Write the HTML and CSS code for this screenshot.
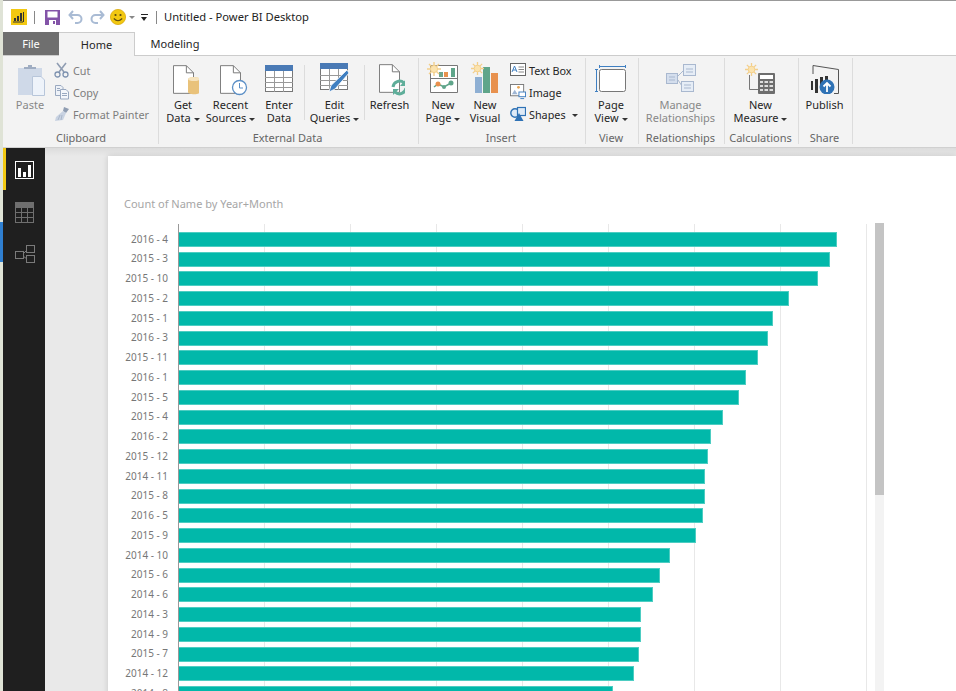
FILE: index.html
```html
<!DOCTYPE html>
<html lang="en">
<head>
    <meta charset="UTF-8" />
    <title>Untitled - Power BI Desktop</title>
    <link rel="stylesheet" href="styles.css">
</head>
<body>

<svg class="sprite" aria-hidden="true">
    <symbol id="sun" viewBox="0 0 14 14">
        <g stroke="#f3cf8b" stroke-width="1.4">
            <path d="M7 0V14M0 7H14M2 2L12 12M12 2L2 12"/>
        </g>
        <circle cx="7" cy="7" r="3.6" fill="#fbe3ae" stroke="#f3cf8b"/>
    </symbol>
    <symbol id="doc" viewBox="0 0 22 30">
        <path d="M.5 .5H14L21.5 8V29.5H.5Z" fill="#fff" stroke="#777"/>
        <path d="M14 .5V8H21.5" fill="none" stroke="#777"/>
    </symbol>
    <symbol id="grid" viewBox="0 0 28 27">
        <rect x=".5" y=".5" width="27" height="26" fill="#fff" stroke="#777"/>
        <rect width="28" height="6" fill="#4a7ab5"/>
        <path d="M0 12.5H28M0 17.5H28M0 22.5H28M9.5 6V27M18.5 6V27" stroke="#999"/>
    </symbol>
</svg>

<div class="desktop-edge">
    <div class="edge-blue"></div>
</div>

<div class="window">
    <header class="titlebar">
        <svg class="qa-logo" width="16" height="16" viewBox="0 0 16 16">
            <rect width="16" height="16" fill="#f2c811"/>
            <path d="M3 12V9H5V12ZM6 12V7H8V12ZM9 12V4H11V12ZM12 13V3H13V13Z" fill="#333"/>
            <path d="M2 13H12" stroke="#333"/>
        </svg>
        <span class="qa-sep"></span>
        <svg class="qa-save" width="15" height="15" viewBox="0 0 15 15">
            <path d="M0 0H15V15H0Z" fill="#8354a8"/>
            <rect x="2.5" y="1.5" width="10" height="6" fill="#fff"/>
            <rect x="4" y="10" width="7" height="5" fill="#fff"/>
            <rect x="8" y="11" width="2" height="3" fill="#8354a8"/>
        </svg>
        <svg class="qa-arrow" width="15" height="14" viewBox="0 0 15 14">
            <path d="M5 1L1.5 5L5 9M2 5H9.5A4 4 0 0 1 9.5 13H7" fill="none" stroke="#a9bbd4" stroke-width="2"/>
        </svg>
        <svg class="qa-arrow" width="15" height="14" viewBox="0 0 15 14">
            <path d="M10 1L13.5 5L10 9M13 5H5.5A4 4 0 0 0 5.5 13H8" fill="none" stroke="#a9bbd4" stroke-width="2"/>
        </svg>
        <svg class="qa-smile" width="16" height="16" viewBox="0 0 16 16">
            <circle cx="8" cy="8" r="7.6" fill="#f2c811" stroke="#d9a90c" stroke-width=".8"/>
            <circle cx="5.5" cy="6" r="1.1" fill="#5a4a10"/>
            <circle cx="10.5" cy="6" r="1.1" fill="#5a4a10"/>
            <path d="M3.8 9.5Q8 14 12.2 9.5" fill="none" stroke="#5a4a10" stroke-width="1.1"/>
        </svg>
        <span class="caret caret-grey"></span>
        <span class="qa-custom"></span>
        <span class="qa-sep qa-sep-last"></span>
        <span class="window-title">Untitled - Power BI Desktop</span>
    </header>

    <nav class="tabs">
        <a class="tab tab-file">File</a>
        <a class="tab tab-active">Home</a>
        <a class="tab tab-plain">Modeling</a>
    </nav>

    <section class="ribbon">
        <div class="group group-clipboard">
            <div class="group-body">
                <div class="rb-btn rb-disabled w-paste">
                    <div class="rb-icon">
                        <svg width="30" height="36" viewBox="-2 0 30 36">
                            <rect x="1" y="8" width="24" height="27" fill="#cfd9e8"/>
                            <path d="M7 9V7H11V5H15V7H19V9Z" fill="#9fadc2"/>
                            <path d="M15.500 16.500H24L27.500 20V35.500H15.500Z" fill="#eef3fa" stroke="#b8c6da"/>
                        </svg>
                    </div>
                    <span>Paste</span>
                </div>
                <div class="small-col">
                    <div class="small-btn small-disabled">
                        <svg width="16" height="16" viewBox="0 0 16 16">
                            <path d="M3 1L10 10M12 1L5 10" stroke="#8f9db2" stroke-width="1.6"/>
                            <circle cx="3.500" cy="12.500" r="2.500" fill="none" stroke="#7f93b0" stroke-width="1.300"/>
                            <circle cx="11.500" cy="12.500" r="2.500" fill="none" stroke="#7f93b0" stroke-width="1.300"/>
                        </svg>
                        <span>Cut</span>
                    </div>
                    <div class="small-btn small-disabled">
                        <svg width="16" height="16" viewBox="0 0 16 16">
                            <path d="M1.500 1.500H7L9 3.500V11.500H1.500Z" fill="#eef2f8" stroke="#9aa9c0"/>
                            <path d="M6.500 5.500H12L14.500 8V15H6.500Z" fill="#f5f7fb" stroke="#9aa9c0"/>
                            <path d="M8 9.500H13M8 11.500H13M3 4.500H6M3 6.500H6" stroke="#9aa9c0"/>
                        </svg>
                        <span>Copy</span>
                    </div>
                    <div class="small-btn small-disabled">
                        <svg width="16" height="16" viewBox="0 0 16 16">
                            <path d="M10 1L15 3L12 7L9 5Z" fill="#8f9db2"/>
                            <path d="M9 5L12 7L9 14L1 15L2 11Z" fill="#c9d3e2"/>
                            <path d="M4 14L6 9M7 14L8 9" stroke="#aab7ca"/>
                        </svg>
                        <span>Format Painter</span>
                    </div>
                </div>
            </div>
            <div class="group-label">Clipboard</div>
        </div>

        <div class="group group-external">
            <div class="group-body">
                <div class="rb-btn w-get">
                    <div class="rb-icon">
                        <svg width="32" height="36" viewBox="-3 0 32 36">
                            <use href="#doc" x="3" y="5" width="21" height="29"/>
                            <path d="M18 19.500C18 16.500 30 16.500 30 19.500V32C30 35 18 35 18 32Z" fill="#e9c27a"/>
                            <ellipse cx="24" cy="19" rx="6" ry="2" fill="#f6e4bf"/>
                        </svg>
                    </div>
                    <span>Get</span>
                    <span>Data<i class="caret"></i></span>
                </div>
                <div class="rb-btn w-recent">
                    <div class="rb-icon">
                        <svg width="34" height="36" viewBox="-1 0 34 36">
                            <use href="#doc" x="5" y="5" width="21" height="29"/>
                            <circle cx="24.500" cy="27.500" r="7" fill="#fff" stroke="#5b8fc6" stroke-width="1.300"/>
                            <path d="M24.500 23V28H28" fill="none" stroke="#5b8fc6"/>
                        </svg>
                    </div>
                    <span>Recent</span>
                    <span>Sources<i class="caret"></i></span>
                </div>
                <div class="rb-btn w-enter">
                    <div class="rb-icon">
                        <svg width="28" height="27" viewBox="0 0 28 27">
                            <use href="#grid" width="28" height="27"/>
                        </svg>
                    </div>
                    <span>Enter</span>
                    <span>Data</span>
                </div>
                <span class="rb-sep"></span>
                <div class="rb-btn w-edit">
                    <div class="rb-icon">
                        <svg width="30" height="30" viewBox="0 0 30 30">
                            <use href="#grid" width="28" height="27"/>
                            <path d="M27 7L29 10L15 26L9 29L11 22.500Z" fill="#3f7fc1" stroke="#fff" stroke-width=".8"/>
                        </svg>
                    </div>
                    <span>Edit</span>
                    <span>Queries<i class="caret"></i></span>
                </div>
                <span class="rb-sep"></span>
                <div class="rb-btn w-refresh">
                    <div class="rb-icon">
                        <svg width="30" height="36" viewBox="-3 0 30 36">
                            <use href="#doc" x="1" y="4" width="21" height="29"/>
                            <path d="M15 27A6.500 6.500 0 0 1 26 23" fill="none" stroke="#5fae9a" stroke-width="3"/>
                            <path d="M28 28A6.500 6.500 0 0 1 17 32" fill="none" stroke="#5fae9a" stroke-width="3"/>
                            <path d="M28 19V26H22ZM15 35V29H21Z" fill="#5fae9a"/>
                        </svg>
                    </div>
                    <span>Refresh</span>
                </div>
            </div>
            <div class="group-label">External Data</div>
        </div>

        <div class="group group-insert">
            <div class="group-body">
                <div class="rb-btn w-newpage">
                    <div class="rb-icon">
                        <svg width="32" height="34" viewBox="0 0 32 34">
                            <path d="M3.500 4.500H30.500V31.500H3.500Z" fill="#fff" stroke="#777"/>
                            <path d="M3 17.500H31" stroke="#777"/>
                            <path d="M12 11H16V16H12Z" fill="#6fa58c"/>
                            <path d="M17 11H21V16H17Z" fill="#e8914e"/>
                            <path d="M24 7H28V16H24Z" fill="#5fa58a"/>
                            <path d="M7 26L11 23L17 26L24 22" fill="none" stroke="#5fa58a" stroke-width="1.500"/>
                            <circle cx="11" cy="23" r="2.500" fill="#e8914e"/>
                            <circle cx="24" cy="22" r="2.500" fill="#5fa58a"/>
                            <circle cx="17" cy="26" r="2" fill="#5fa58a"/>
                            <use href="#sun" x="0" y="1" width="14" height="14"/>
                        </svg>
                    </div>
                    <span>New</span>
                    <span>Page<i class="caret"></i></span>
                </div>
                <div class="rb-btn w-visual">
                    <div class="rb-icon">
                        <svg width="30" height="34" viewBox="-1 2 30 34">
                            <rect x="4" y="18" width="7" height="16" fill="#8eafd3"/>
                            <rect x="12" y="8" width="7" height="26" fill="#5fa58a"/>
                            <rect x="20" y="14" width="7" height="20" fill="#e8914e"/>
                            <use href="#sun" x="0" y="3" width="13" height="13"/>
                        </svg>
                    </div>
                    <span>New</span>
                    <span>Visual</span>
                </div>
                <div class="small-col small-col-insert">
                    <div class="small-btn">
                        <svg width="16" height="16" viewBox="0 0 16 16">
                            <rect x=".5" y="1.500" width="15" height="12" fill="#fff" stroke="#666"/>
                            <path d="M2 10L4.500 4L7 10M3 8H6" fill="none" stroke="#3f7fc1"/>
                            <path d="M8.500 5H14M8.500 7.500H14M8.500 10H14" stroke="#888"/>
                        </svg>
                        <span>Text Box</span>
                    </div>
                    <div class="small-btn">
                        <svg width="16" height="16" viewBox="0 0 17 17">
                            <rect x=".5" y=".5" width="14" height="12" fill="#fff" stroke="#777"/>
                            <path d="M2 11L5 6L8 11Z" fill="#9fb6d4"/>
                            <circle cx="9" cy="3.500" r="1.500" fill="#e9a552"/>
                            <rect x="9.500" y="8.500" width="7" height="5" fill="#fff" stroke="#3f7fc1"/>
                            <path d="M11 15.500H15" stroke="#3f7fc1"/>
                        </svg>
                        <span>Image</span>
                    </div>
                    <div class="small-btn">
                        <svg width="16" height="16" viewBox="0 0 16 16">
                            <circle cx="5" cy="7" r="4.200" fill="#dfeaf6" stroke="#2f72b5" stroke-width="1.400"/>
                            <rect x="7.500" y="1.500" width="8" height="8" fill="#dfeaf6" stroke="#2f72b5" stroke-width="1.200"/>
                            <path d="M9 7L13.500 15H4.500Z" fill="#2f72b5"/>
                        </svg>
                        <span>Shapes<i class="caret caret-gap"></i></span>
                    </div>
                </div>
            </div>
            <div class="group-label">Insert</div>
        </div>

        <div class="group group-view">
            <div class="group-body">
                <div class="rb-btn w-full">
                    <div class="rb-icon">
                        <svg width="32" height="30" viewBox="0 -2 32 30">
                            <rect x="4.500" y="4.500" width="26" height="22" rx="2" fill="#fff" stroke="#777"/>
                            <path d="M4.500 0V3M30.500 0V3M4.500 1.500H30.500" stroke="#3f7fc1"/>
                            <path d="M0 4.500H3M0 26.500H3M1.500 4.500V26.500" stroke="#3f7fc1"/>
                        </svg>
                    </div>
                    <span>Page</span>
                    <span>View<i class="caret"></i></span>
                </div>
            </div>
            <div class="group-label">View</div>
        </div>

        <div class="group group-rel">
            <div class="group-body">
                <div class="rb-btn rb-disabled w-full">
                    <div class="rb-icon">
                        <svg width="30" height="30" viewBox="0 0 30 30">
                            <path d="M12 13L18 7M12 17L16 23" stroke="#a9b8cf" fill="none"/>
                            <rect x=".5" y="10.500" width="11" height="10" fill="#d4deed" stroke="#a9b8cf"/>
                            <rect x="17.500" y="1.500" width="12" height="11" fill="#e6edf6" stroke="#a9b8cf"/>
                            <rect x="15.500" y="18.500" width="12" height="10" fill="#e6edf6" stroke="#a9b8cf"/>
                            <path d="M3 14H9M3 17H9M20 6H27M20 9H27M18 22H25M18 25H25" stroke="#a9b8cf"/>
                        </svg>
                    </div>
                    <span>Manage</span>
                    <span>Relationships</span>
                </div>
            </div>
            <div class="group-label">Relationships</div>
        </div>

        <div class="group group-calc">
            <div class="group-body">
                <div class="rb-btn w-full">
                    <div class="rb-icon">
                        <svg width="32" height="34" viewBox="0 0 32 34">
                            <path d="M4.500 14V28.500H13" fill="none" stroke="#777"/>
                            <rect x="13" y="12" width="17" height="21" rx="1" fill="#6d6d6d"/>
                            <rect x="15" y="14" width="13" height="4" fill="#fff"/>
                            <path d="M15 21H18M19.500 21H23M24.500 21H28M15 25H18M19.500 25H23M24.500 25H28M15 29H18M19.500 29H23M24.500 29H28" stroke="#ddd" stroke-width="2"/>
                            <use href="#sun" x="0" y="2" width="13" height="13"/>
                        </svg>
                    </div>
                    <span>New</span>
                    <span>Measure<i class="caret"></i></span>
                </div>
            </div>
            <div class="group-label">Calculations</div>
        </div>

        <div class="group group-share">
            <div class="group-body">
                <div class="rb-btn w-full">
                    <div class="rb-icon">
                        <svg width="30" height="32" viewBox="0 0 30 32">
                            <path d="M3 12V3.500L28.500 7.500V31.500H24" fill="none" stroke="#555"/>
                            <rect x="1" y="19" width="2" height="9" fill="#333"/>
                            <rect x="5" y="17" width="3" height="14" fill="#333"/>
                            <rect x="10" y="15" width="3" height="10" fill="#333"/>
                            <rect x="15" y="14" width="3" height="8" fill="#333"/>
                            <circle cx="17" cy="25" r="7.500" fill="#2f72b5"/>
                            <path d="M17 30V21M13.500 24.500L17 21L20.500 24.500" fill="none" stroke="#fff" stroke-width="1.800"/>
                        </svg>
                    </div>
                    <span>Publish</span>
                </div>
            </div>
            <div class="group-label">Share</div>
        </div>
    </section>

    <div class="workspace">
        <aside class="rail">
            <div class="rail-item rail-active">
                <svg width="22" height="22" viewBox="-2 -2 22 22">
                    <rect x=".5" y=".5" width="18" height="17" fill="none" stroke="#fff"/>
                    <path d="M3 7H6V16H3ZM8 11H11V16H8ZM13 4H16V16H13Z" fill="#fff"/>
                </svg>
            </div>
            <div class="rail-item">
                <svg width="22" height="22" viewBox="-2 -2 22 22">
                    <rect x=".5" y="-.5" width="18" height="20" fill="none" stroke="#6f6f6f"/>
                    <rect y="-1" width="19" height="6" fill="#6f6f6f"/>
                    <path d="M0 9.500H19M0 14.500H19M6.500 5V20M12.500 5V20" stroke="#6f6f6f"/>
                </svg>
            </div>
            <div class="rail-item">
                <svg width="22" height="22" viewBox="-2 -2 22 22">
                    <rect x=".5" y="6.500" width="8" height="7" fill="none" stroke="#7a7a7a"/>
                    <rect x="11.500" y=".5" width="8" height="7" fill="none" stroke="#7a7a7a"/>
                    <rect x="11.500" y="10.500" width="8" height="7" fill="none" stroke="#7a7a7a"/>
                    <path d="M8 9L12 5M8 11L12 14" stroke="#7a7a7a"/>
                </svg>
            </div>
        </aside>

        <main class="canvas">
            <div class="report-page">
                <div class="visual-title">Count of Name by Year+Month</div>
                <div class="chart">
                    <div class="axis-labels">
                        <div class="axis-label">2016 - 4</div>
                        <div class="axis-label">2015 - 3</div>
                        <div class="axis-label">2015 - 10</div>
                        <div class="axis-label">2015 - 2</div>
                        <div class="axis-label">2015 - 1</div>
                        <div class="axis-label">2016 - 3</div>
                        <div class="axis-label">2015 - 11</div>
                        <div class="axis-label">2016 - 1</div>
                        <div class="axis-label">2015 - 5</div>
                        <div class="axis-label">2015 - 4</div>
                        <div class="axis-label">2016 - 2</div>
                        <div class="axis-label">2015 - 12</div>
                        <div class="axis-label">2014 - 11</div>
                        <div class="axis-label">2015 - 8</div>
                        <div class="axis-label">2016 - 5</div>
                        <div class="axis-label">2015 - 9</div>
                        <div class="axis-label">2014 - 10</div>
                        <div class="axis-label">2015 - 6</div>
                        <div class="axis-label">2014 - 6</div>
                        <div class="axis-label">2014 - 3</div>
                        <div class="axis-label">2014 - 9</div>
                        <div class="axis-label">2015 - 7</div>
                        <div class="axis-label">2014 - 12</div>
                        <div class="axis-label">2014 - 8</div>
                    </div>
                    <div class="plot">
                        <div class="bar-row"><div class="bar" style="width: 658px"></div></div>
                        <div class="bar-row"><div class="bar" style="width: 651px"></div></div>
                        <div class="bar-row"><div class="bar" style="width: 639px"></div></div>
                        <div class="bar-row"><div class="bar" style="width: 610px"></div></div>
                        <div class="bar-row"><div class="bar" style="width: 594px"></div></div>
                        <div class="bar-row"><div class="bar" style="width: 589px"></div></div>
                        <div class="bar-row"><div class="bar" style="width: 579px"></div></div>
                        <div class="bar-row"><div class="bar" style="width: 567px"></div></div>
                        <div class="bar-row"><div class="bar" style="width: 560px"></div></div>
                        <div class="bar-row"><div class="bar" style="width: 544px"></div></div>
                        <div class="bar-row"><div class="bar" style="width: 532px"></div></div>
                        <div class="bar-row"><div class="bar" style="width: 529px"></div></div>
                        <div class="bar-row"><div class="bar" style="width: 526px"></div></div>
                        <div class="bar-row"><div class="bar" style="width: 526px"></div></div>
                        <div class="bar-row"><div class="bar" style="width: 524px"></div></div>
                        <div class="bar-row"><div class="bar" style="width: 517px"></div></div>
                        <div class="bar-row"><div class="bar" style="width: 491px"></div></div>
                        <div class="bar-row"><div class="bar" style="width: 481px"></div></div>
                        <div class="bar-row"><div class="bar" style="width: 474px"></div></div>
                        <div class="bar-row"><div class="bar" style="width: 462px"></div></div>
                        <div class="bar-row"><div class="bar" style="width: 462px"></div></div>
                        <div class="bar-row"><div class="bar" style="width: 460px"></div></div>
                        <div class="bar-row"><div class="bar" style="width: 455px"></div></div>
                        <div class="bar-row"><div class="bar" style="width: 434px"></div></div>
                    </div>
                    <div class="scrollbar">
                        <div class="scroll-thumb"></div>
                    </div>
                </div>
            </div>
        </main>
    </div>
</div>

</body>
</html>
```

FILE: styles.css
```css
html, body {
    height: 100%;
}
body {
    margin: 0;
    display: flex;
    overflow: hidden;
    background: #fff;
    font-family: "Noto Sans", "Open Sans", sans-serif;
    font-size: 11px;
    color: #252525;
}
.sprite {
    width: 0;
    height: 0;
    display: block;
    overflow: hidden;
}
svg {
    display: block;
    flex: none;
}

.desktop-edge {
    width: 3px;
    flex: none;
    padding-top: 222px;
    background: #dfe3d6;
}
.edge-blue {
    height: 40px;
    background: #2f7fd0;
}

.window {
    flex: 1;
    min-width: 0;
    display: flex;
    flex-direction: column;
}

/* title bar */
.titlebar {
    height: 32px;
    flex: none;
    box-sizing: border-box;
    padding: 1px 0 0 8px;
    display: flex;
    align-items: center;
    border-top: 1px solid #999;
}
.qa-sep {
    width: 1px;
    height: 13px;
    margin: 0 10px 0 7px;
    background: #888;
}
.qa-sep-last {
    margin: 0 7px 0 8px;
}
.qa-arrow {
    margin-left: 7px;
}
.qa-save + .qa-arrow {
    margin-left: 8px;
}
.qa-smile {
    margin-left: 5px;
}
.qa-custom {
    width: 7px;
    height: 6px;
    margin-left: 6px;
    border-top: 1px solid #222;
    position: relative;
}
.qa-custom::after {
    content: "";
    position: absolute;
    left: 0;
    top: 2px;
    border: 3.5px solid transparent;
    border-top: 4px solid #222;
    border-bottom: 0;
}
.window-title {
    margin-top: -2px;
    font-size: 11.2px;
    color: #222;
}

/* tabs */
.tabs {
    height: 24px;
    flex: none;
    box-sizing: border-box;
    display: flex;
    border-bottom: 1px solid #ccc;
}
.tab {
    display: flex;
    align-items: center;
    justify-content: center;
    box-sizing: border-box;
}
.tab-file {
    width: 56px;
    height: 23px;
    background: #6f6f6f;
    color: #fff;
}
.tab-active {
    width: 76px;
    height: 24px;
    padding-bottom: 1px;
    background: #f3f3f3;
    border-top: 1px solid #ccc;
    border-right: 1px solid #ccc;
    position: relative;
}
.tab-plain {
    width: 80px;
    height: 23px;
}

/* ribbon */
.ribbon {
    height: 92px;
    flex: none;
    box-sizing: border-box;
    display: flex;
    padding: 2px 0 3px;
    background: #f3f3f3;
    border-bottom: 1px solid #d0d0d0;
}
.group {
    box-sizing: border-box;
    display: flex;
    flex-direction: column;
    border-right: 1px solid #dcdcdc;
}
.group-clipboard { width: 156px; padding-left: 3px; }
.group-external { width: 260px; }
.group-insert { width: 167px; }
.group-view { width: 53px; }
.group-rel { width: 86px; }
.group-calc { width: 74px; }
.group-share { width: 54px; }

.group-body {
    flex: 1;
    display: flex;
}
.group-label {
    height: 18px;
    line-height: 24px;
    padding-right: 2px;
    text-align: center;
    color: #666;
}
.rb-btn {
    display: flex;
    flex-direction: column;
    align-items: center;
    line-height: 13px;
    white-space: nowrap;
}
.rb-disabled {
    color: #888;
}
.rb-icon {
    height: 40px;
    display: flex;
    align-items: center;
    justify-content: center;
}
.w-paste { width: 48px; }
.w-get { width: 48px; }
.w-recent { width: 47px; }
.w-enter { width: 50px; }
.w-edit { width: 59px; }
.w-refresh { width: 49px; }
.w-newpage { width: 48px; }
.w-visual { width: 36px; }
.w-full { width: calc(100% - 2px); }
.rb-sep {
    width: 1px;
    height: 55px;
    margin-top: 7px;
    background: #dcdcdc;
    flex: none;
}
.caret {
    display: inline-block;
    vertical-align: middle;
    margin-left: 3px;
    border: 3px solid transparent;
    border-top: 3px solid #333;
    border-bottom: 0;
}
.caret-grey {
    margin-left: 3px;
    border-top-color: #888;
}
.caret-gap {
    margin-left: 6px;
}
.small-col {
    padding-top: 1px;
    display: flex;
    flex-direction: column;
}
.small-col-insert {
    margin-left: 7px;
}
.small-btn {
    height: 22px;
    display: flex;
    align-items: center;
    gap: 3px;
    font-size: 10.8px;
    white-space: nowrap;
}
.small-disabled {
    color: #7d7d7d;
}

/* main area */
.workspace {
    flex: 1;
    min-height: 0;
    display: flex;
}
.rail {
    width: 42px;
    flex: none;
    background: #1f1f1f;
}
.rail-item {
    height: 42px;
    box-sizing: border-box;
    padding-top: 2px;
    display: flex;
    align-items: center;
    justify-content: center;
}
.rail-active {
    border-left: 3px solid #f2c811;
    padding-right: 3px;
}
.canvas {
    flex: 1;
    min-width: 0;
    padding: 8px 0 0 63px;
    overflow: hidden;
    background: linear-gradient(#dcdcdc, #e9e9e9 8px);
}
.report-page {
    height: 700px;
    background: #fff;
    box-shadow: 0 0 6px rgba(0, 0, 0, 0.15);
}
.visual-title {
    padding: 38px 0 0 16px;
    height: 30px;
    line-height: 20px;
    color: #a6a6a6;
    font-size: 11px;
}
.chart {
    display: flex;
    height: 480px;
}
.axis-labels {
    width: 60px;
    margin-right: 10px;
    padding-top: 5.6px;
    flex: none;
}
.axis-label {
    height: 19.75px;
    line-height: 19.75px;
    text-align: right;
    color: #777;
    font-size: 10px;
}
.plot {
    width: 688px;
    flex: none;
    padding-top: 5.6px;
    border-left: 1px solid #999;
    background: repeating-linear-gradient(to right, transparent 0 85px, #e8e8e8 85px 86px);
}
.bar-row {
    height: 19.75px;
    display: flex;
    align-items: center;
}
.bar {
    height: 15px;
    box-sizing: border-box;
    background: #01b8aa;
    border: 1px solid #4dcdc2;
    border-width: 1px 1px 1px 0;
}
.scrollbar {
    width: 9px;
    margin: -1px 0 0 8px;
    background: #f3f3f3;
}
.scroll-thumb {
    height: 272px;
    background: #c4c4c4;
}
```
